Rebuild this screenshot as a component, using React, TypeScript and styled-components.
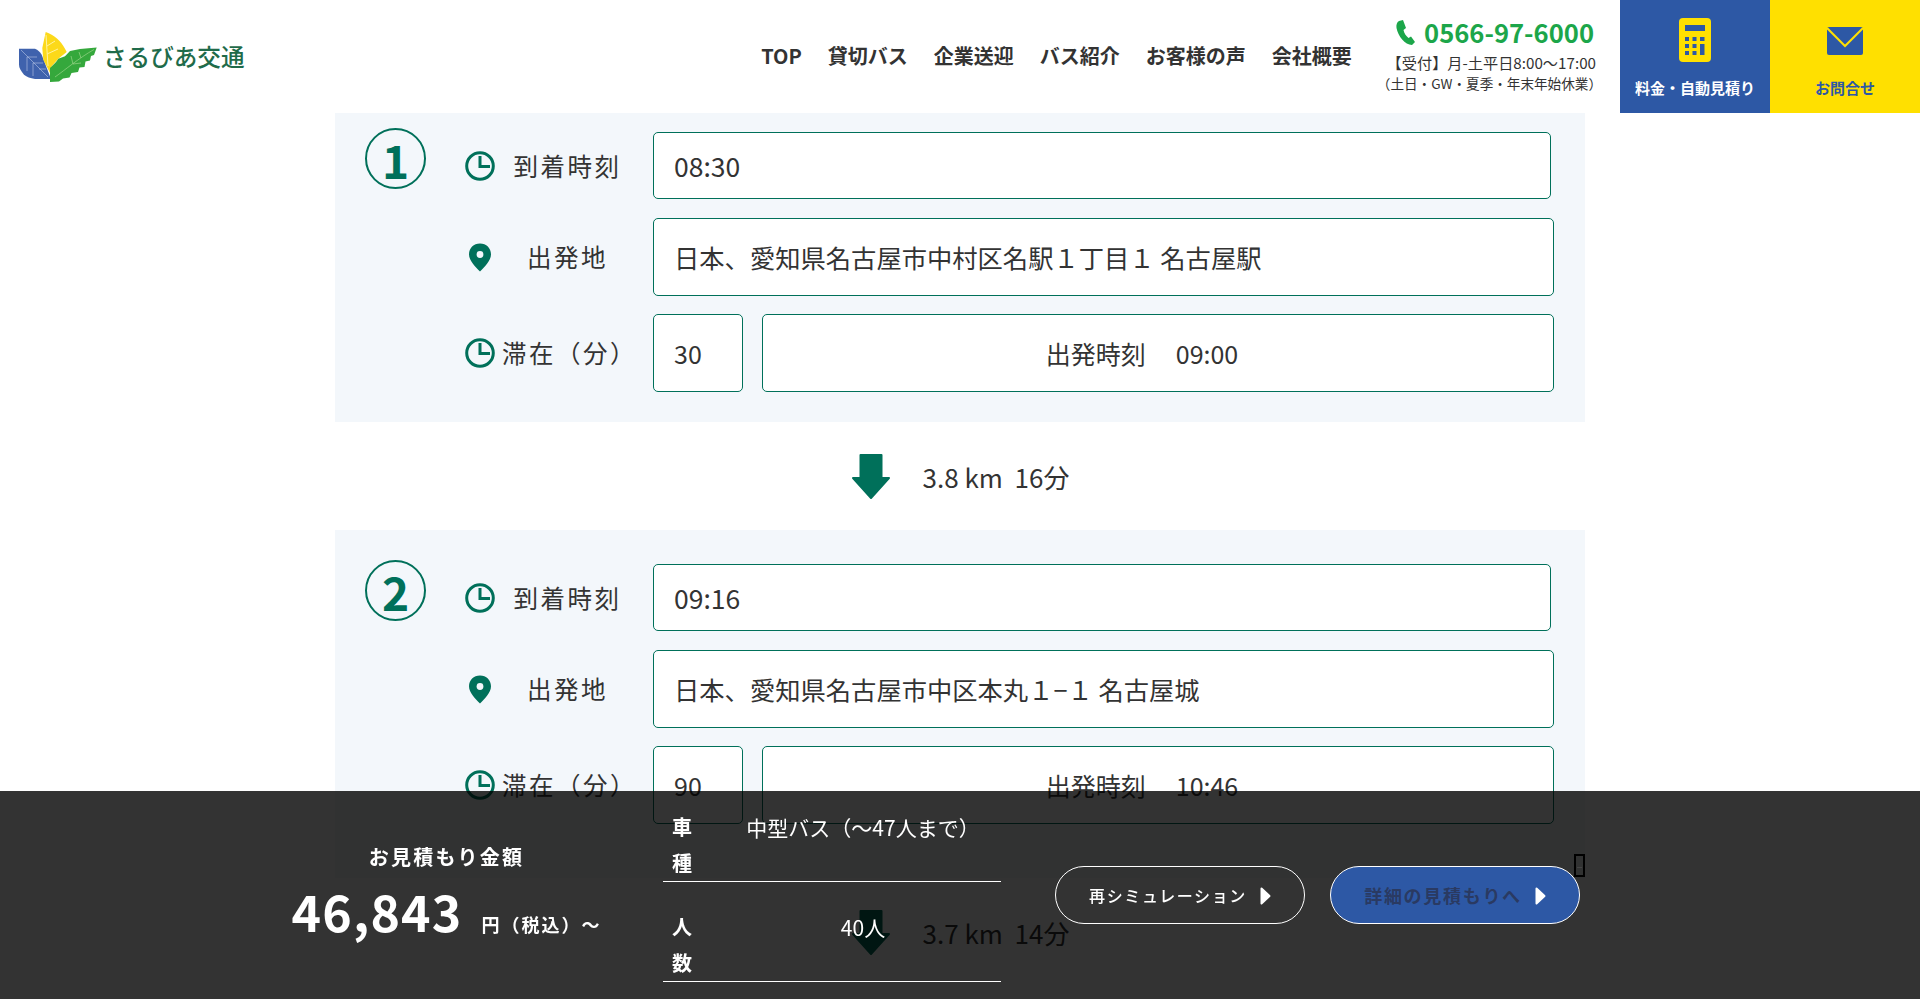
import React from "react";
import styled, { createGlobalStyle } from "styled-components";

const GREEN = "#00705a";
const FONT = `"Noto Sans CJK JP", "Noto Sans", sans-serif`;

const Global = createGlobalStyle`
  html, body { margin: 0; padding: 0; background: #fff; overflow: hidden; height: 999px; }
  body { font-family: ${FONT}; color: #333; }
  * { box-sizing: border-box; }
`;

const Header = styled.header`
  position: fixed; top: 0; left: 0; right: 0; height: 113px; background: #fff; z-index: 10;
  display: flex; align-items: stretch; justify-content: space-between;
`;
const Logo = styled.div`
  display: flex; align-items: center; gap: 6px; padding-left: 19px; height: 113px;
`;
const LogoText = styled.span`
  font-size: 23.6px; font-weight: 500; color: #1f6b4a; line-height: 1; white-space: nowrap;
`;
const HeaderRight = styled.div`display: flex; align-items: stretch;`;
const Nav = styled.nav`
  display: flex; align-items: center; gap: 26px; margin-right: 25px;
`;
const NavLink = styled.a`
  font-size: 20px; font-weight: 700; color: #333; white-space: nowrap; line-height: 1; margin-top: -1px;
`;
const Contact = styled.div`
  display: flex; flex-direction: column; align-items: flex-end; margin-right: 23px; padding-top: 13px; white-space: nowrap;
`;
const Phone = styled.div`
  display: flex; align-items: center; gap: 9px; color: #1ca64a; font-size: 25.6px; font-weight: 700; line-height: 38px; height: 38px; margin-right: 3px;
`;
const Hours = styled.div`font-size: 15.2px; line-height: 22px; color: #333; margin-right: 1px;`;
const Closed = styled.div`font-size: 13.6px; line-height: 21px; color: #333; margin-right: -5px;`;
const CTA = styled.a<{ $bg: string; $fg: string }>`
  width: 150px; height: 113px; background: ${p => p.$bg}; color: ${p => p.$fg};
  display: flex; flex-direction: column; align-items: center; justify-content: flex-end;
  font-size: 15px; font-weight: 700; padding-bottom: 15px; line-height: 20px; white-space: nowrap; position: relative;
`;
const CTAIcon = styled.svg<{ $mb: number }>`display: block; margin-bottom: ${p => p.$mb}px;`;

const Main = styled.main`
  width: 1250px; margin-left: 335px; padding-top: 98px;
`;
const Panel = styled.section<{ $extra?: number }>`
  background: #f3f7fb; height: ${p => 324 + (p.$extra || 0)}px; display: flex; padding: 30px 0 0 30px;
`;
const Num = styled.div`
  width: 61px; height: 61px; border: 2px solid ${GREEN}; border-radius: 50%; color: ${GREEN};
  font-size: 46px; font-weight: 700; display: flex; align-items: center; justify-content: center; line-height: 1; flex: none; margin-right: 39px;
`;
const Rows = styled.div`display: flex; flex-direction: column; padding-top: 4px;`;
const Row = styled.div<{ $h: number; $mb: number }>`
  display: flex; align-items: center; height: ${p => p.$h}px; margin-bottom: ${p => p.$mb}px;
`;
const IconCell = styled.div`width: 30px; flex: none; display: flex; justify-content: center;`;
const Label = styled.div<{ $inset?: number }>`
  width: 145px; flex: none; margin-right: 13px; text-align: center; font-size: 24.5px; letter-spacing: 2.5px; color: #333; white-space: nowrap; line-height: 1; margin-top: 1px;
  padding-left: ${p => p.$inset || 0}px;
`;
const Field = styled.div<{ $w: number; $center?: boolean; $size?: number }>`
  width: ${p => p.$w}px; height: 100%; background: #fff; border: 1px solid ${GREEN}; border-radius: 5px;
  font-size: ${p => p.$size || 25}px; color: #333; display: flex; align-items: center; white-space: pre; flex: none;
  padding-left: 20px;
  ${p => p.$center ? "justify-content: center; padding: 0 32px 0 0; gap: 30px;" : ""}
`;
const Small = styled.div`width: 19px; flex: none;`;

const Leg = styled.div`
  height: 108px; display: flex; align-items: center; justify-content: center; gap: 32px; font-size: 26px; color: #333; white-space: pre;
`;
const LegText = styled.span`margin-top: 1px;`;

const Bar = styled.footer`
  position: fixed; left: 0; right: 0; bottom: 0; height: 208px; background: rgba(0,0,0,.8); z-index: 20;
  display: flex; align-items: center; padding-left: 293px; color: #fff;
`;
const Price = styled.div`width: 307px; flex: none; margin: 8px 63px 0 0; display: flex; flex-direction: column; align-items: center;`;
const PriceLabel = styled.div`font-size: 20px; font-weight: 700; letter-spacing: 2.2px; line-height: 30px;`;
const PriceRow = styled.div`display: flex; align-items: baseline; gap: 19px; margin-top: 6px; line-height: 64px; white-space: nowrap;`;
const Amount = styled.span`font-size: 50px; font-weight: 700; letter-spacing: 1.2px;`;
const Unit = styled.span`font-size: 18px; font-weight: 700; letter-spacing: 2px;`;
const Spec = styled.div`width: 338px; flex: none; margin-right: 54px; font-size: 20px; line-height: 36px;`;
const SpecRow = styled.div`
  display: flex; border-bottom: 1px solid #fff; & + & { padding-top: 27px; }
`;
const SpecHead = styled.div`width: 62px; flex: none; padding: 0 32px 0 9px; font-weight: 700;`;
const SpecVal = styled.div`flex: 1; text-align: center; white-space: nowrap; font-size: 21px;`;
const Btn = styled.a<{ $primary?: boolean }>`
  width: 250px; height: 58px; border: 1px solid #fff; border-radius: 29px; flex: none; position: relative;
  background: ${p => p.$primary ? "#2d58a5" : "transparent"};
  color: ${p => p.$primary ? "#2a3a62" : "#fff"};
  font-weight: ${p => p.$primary ? 700 : 500}; font-size: ${p => p.$primary ? 18 : 16}px; letter-spacing: ${p => p.$primary ? 1.7 : 1.6}px;
  display: flex; align-items: center; justify-content: center; gap: 13px; white-space: nowrap;
  margin-right: ${p => p.$primary ? 0 : 25}px;
`;
const Tofu = styled.span`
  position: absolute; right: -6px; top: -13px; width: 11px; height: 23px; border: 2px solid #000;
  display: flex; align-items: center; justify-content: center; padding-top: 3px;
  &::after { content: ""; width: 5px; height: 1px; background: #444; }
`;
const TriIcon = styled.svg`margin-top: 2px; flex: none;`;

const Tri = () => (
  <TriIcon width="11" height="18" viewBox="0 0 11 18">
    <path d="M1.5 1.5 9.5 9 1.5 16.5z" fill="#fff" stroke="#fff" strokeWidth="2" strokeLinejoin="round" />
  </TriIcon>
);
const Clock = () => (
  <svg width="30" height="30" viewBox="0 0 30 30" fill="none" stroke={GREEN} strokeWidth="3">
    <circle cx="15" cy="15" r="13.3" />
    <path d="M15 5v10.5h10" />
  </svg>
);
const Pin = () => (
  <svg width="24" height="29" viewBox="0 0 24 29">
    <path d="M12 0.5C5.6.5 1 5.2 1 11.2c0 6.4 6.4 12.6 11 17.3 4.6-4.7 11-10.9 11-17.3C23 5.2 18.4.5 12 .5z" fill={GREEN} />
    <circle cx="12" cy="11.5" r="3.4" fill="#f3f7fb" />
  </svg>
);
const Arrow = () => (
  <svg width="40" height="47" viewBox="0 0 40 47">
    <path d="M9.5 2h21v23H38L20 45 2 25h7.5z" fill={GREEN} stroke={GREEN} strokeWidth="2" strokeLinejoin="round" />
  </svg>
);
const LogoMark = () => (
  <svg width="78" height="50" viewBox="0 0 78 50">
    <path d="M0 16.7 16 16.7C19 18 21 20 22.7 22.7L32 47 16 47C11 46 8 45 5 42.7 2 39 0 36 0 32.7Z" fill="#3f62ad" />
    <path d="M2 18 29 45M8 25V39M14 31V44M8 25H18M14 31H24M20 37H27" stroke="#b9c8e6" strokeWidth=".6" fill="none" />
    <path d="M26.7 0C35 3 42 9 46 16.7L47.7 20 39.3 26.7 32.7 34.3 31 41 24.3 27.7 23.3 16Z" fill="#fcd91a" />
    <path d="M27 3 29 34M28 14 36 9M28 22 39 17" stroke="#fff3a0" strokeWidth="1" fill="none" />
    <path d="M31 49 31 36 37 30 39.3 26.7 46 24.3 51 19 61 17 77.7 15.5 75 23 72 24 71 28.5 66.5 29.5 65.5 35 60.5 35.5 59 40 52.5 41 50.5 45.5 44 46.5 40 49.5 31 50Z" fill="#35a83c" />
    <path d="M36 45C46 38 60 26 75 17.5M54 32 52 24M62 26 60 20M54 32 62 31" stroke="#a9dc96" strokeWidth=".6" fill="none" />
  </svg>
);
const PhoneIcon = () => (
  <svg width="20" height="25" viewBox="0 0 20 25" fill="currentColor">
    <path d="M4 1 8 0 11 8 8.5 10C9 13 11 16 13.5 18L16 16.5 20 22 17 25C10 25 3 16 1.5 8 1 5 2 2 4 1Z" />
  </svg>
);
const Calc = () => (
  <CTAIcon $mb={16} width="32" height="44" viewBox="0 0 32 44">
    <rect width="32" height="44" rx="4" fill="#ffe000" />
    <g fill="#2d58a5">
      <rect x="6" y="7" width="20" height="6" />
      <rect x="6" y="19" width="4" height="4" /><rect x="13.5" y="19" width="4" height="4" /><rect x="21" y="19" width="4.5" height="4" />
      <rect x="6" y="26" width="4" height="4" /><rect x="13.5" y="26" width="4" height="4" /><rect x="21" y="26" width="4.5" height="11" />
      <rect x="6" y="33" width="4" height="4" /><rect x="13.5" y="33" width="4" height="4" />
    </g>
  </CTAIcon>
);
const Mail = () => (
  <CTAIcon $mb={23} width="36" height="28" viewBox="0 0 36 28">
    <rect width="36" height="28" rx="2" fill="#2d58a5" />
    <path d="M0 1 18 19 36 1" fill="none" stroke="#ffe000" strokeWidth="2" />
  </CTAIcon>
);

const Stop = ({ n, arrive, addr, stay, leave, extra }: { n: number; arrive: string; addr: string; stay: string; leave: string; extra?: number }) => (
  <Panel $extra={extra}>
    <Num>{n}</Num>
    <Rows>
      <Row $h={67} $mb={19}>
        <IconCell><Clock /></IconCell>
        <Label>到着時刻</Label>
        <Field $w={898} $size={26.5}>{arrive}</Field>
      </Row>
      <Row $h={78} $mb={18}>
        <IconCell><Pin /></IconCell>
        <Label>出発地</Label>
        <Field $w={901} $size={25.3}>{addr}</Field>
      </Row>
      <Row $h={78} $mb={0}>
        <IconCell><Clock /></IconCell>
        <Label $inset={4}>滞在（分）</Label>
        <Field $w={90}>{stay}</Field>
        <Small />
        <Field $w={792} $center><span>出発時刻</span><span>{leave}</span></Field>
      </Row>
    </Rows>
  </Panel>
);

const LegRow = ({ text }: { text: string }) => (
  <Leg><Arrow /><LegText>{text}</LegText></Leg>
);

export default function App() {
  return (
    <>
      <Global />
      <Header>
        <Logo><LogoMark /><LogoText>さるびあ交通</LogoText></Logo>
        <HeaderRight>
          <Nav>
            {["TOP", "貸切バス", "企業送迎", "バス紹介", "お客様の声", "会社概要"].map(t => <NavLink key={t}>{t}</NavLink>)}
          </Nav>
          <Contact>
            <Phone><PhoneIcon />0566-97-6000</Phone>
            <Hours>【受付】月-土平日8:00～17:00</Hours>
            <Closed>（土日・GW・夏季・年末年始休業）</Closed>
          </Contact>
          <CTA $bg="#2d58a5" $fg="#fff"><Calc />料金・自動見積り</CTA>
          <CTA $bg="#ffe000" $fg="#2d58a5"><Mail />お問合せ</CTA>
        </HeaderRight>
      </Header>
      <Main>
        <Stop n={1} arrive="08:30" addr="日本、愛知県名古屋市中村区名駅１丁目１ 名古屋駅" stay="30" leave="09:00" />
        <LegRow text="3.8 km  16分" />
        <Stop n={2} arrive="09:16" addr="日本、愛知県名古屋市中区本丸１−１ 名古屋城" stay="90" leave="10:46" extra={24} />
        <LegRow text="3.7 km  14分" />
      </Main>
      <Bar>
        <Price>
          <PriceLabel>お見積もり金額</PriceLabel>
          <PriceRow><Amount>46,843</Amount><Unit>円（税込）～</Unit></PriceRow>
        </Price>
        <Spec>
          <SpecRow><SpecHead>車種</SpecHead><SpecVal>中型バス（～47人まで）</SpecVal></SpecRow>
          <SpecRow><SpecHead>人数</SpecHead><SpecVal>40人</SpecVal></SpecRow>
        </Spec>
        <Btn>再シミュレーション<Tri /></Btn>
        <Btn $primary>詳細の見積もりへ<Tri /><Tofu /></Btn>
      </Bar>
    </>
  );
}
